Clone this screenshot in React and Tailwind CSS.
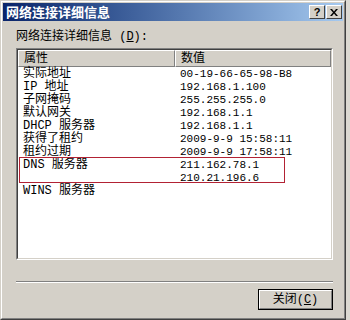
import React from 'react';

const ROWS = [
  ['实际地址', '00-19-66-65-98-B8'],
  ['IP 地址', '192.168.1.100'],
  ['子网掩码', '255.255.255.0'],
  ['默认网关', '192.168.1.1'],
  ['DHCP 服务器', '192.168.1.1'],
  ['获得了租约', '2009-9-9 15:58:11'],
  ['租约过期', '2009-9-9 17:58:11'],
  ['DNS 服务器', '211.162.78.1'],
  ['', '210.21.196.6'],
  ['WINS 服务器', ''],
];

/**
 * Raised caption button (? / X)
 */
const CaptionButton = ({ children }) => (
  <div className="w-[16px] h-[14px] bg-[#d4d0c8] border-t border-l border-white border-r border-b border-r-[#404040] border-b-[#404040] flex items-center justify-center text-black">
    {children}
  </div>
);

const HeaderCell = ({ label, className }) => (
  <div
    className={`h-[17px] flex items-center pl-[5px] bg-[#d4d0c8] border-t border-l border-white border-r border-b border-r-[#808080] border-b-[#808080] leading-[14px] ${className || ''}`}
  >
    {label}
  </div>
);

export default function App() {
  return (
    <div className="w-[350px] h-[320px] bg-[#dcd9d2] font-['Liberation_Mono','Noto_Sans_CJK_SC',monospace] text-[12px] text-black">
      <div className="w-[346px] h-[320px] border-t border-l border-[#d4d0c8] border-r border-b border-r-[#404040] border-b-[#404040]">
        <div className="h-full flex flex-col bg-[#d4d0c8] border-t border-l border-white border-r border-b border-r-[#808080] border-b-[#808080] p-[1px]">
          {/* Title bar */}
          <div className="h-[18px] flex items-center justify-between pl-[3px] pr-[1px] bg-gradient-to-r from-[#0a246a] to-[#a6caf0]">
            <span className="font-['Noto_Sans_CJK_SC',sans-serif] font-bold text-[13px] leading-[16px] text-white">
              网络连接详细信息
            </span>
            <div className="flex items-center">
              <CaptionButton>
                <span className="font-['Liberation_Sans',sans-serif] font-bold text-[11px] leading-[11px]">?</span>
              </CaptionButton>
              <div className="ml-[1px]">
                <CaptionButton>
                  <svg width="8" height="7" viewBox="0 0 8 7">
                    <path d="M0 0h2l2 2.5L6 0h2L5 3.5 8 7H6L4 4.5 2 7H0l3-3.5z" fill="#000" />
                  </svg>
                </CaptionButton>
              </div>
            </div>
          </div>

          {/* Body */}
          <div className="flex-1 flex flex-col pl-[13px] pr-[10px]">
            <div className="mt-[9px] h-[14px] leading-[14px]">
              网络连接详细信息 (<span className="underline">D</span>):
            </div>

            {/* List view */}
            <div className="relative mt-[4px] h-[212px] border-t border-l border-[#808080] border-r border-b border-r-white border-b-white">
              <div className="h-full bg-white border-t border-l border-[#404040] border-r border-b border-r-[#d4d0c8] border-b-[#d4d0c8]">
                <div className="flex">
                  <HeaderCell label="属性" className="w-[157px]" />
                  <HeaderCell label="数值" className="flex-1" />
                </div>
                <div className="flex flex-col mt-[1px]">
                  {ROWS.map(([name, value], i) => (
                    <div key={i} className="flex h-[13px] leading-[13px]">
                      <div className="w-[157px] pl-[5px]">{name}</div>
                      <div className="flex-1 pl-[5px] text-[11px]">{value}</div>
                    </div>
                  ))}
                </div>
              </div>
              {/* highlight around DNS rows */}
              <div className="absolute left-[2px] top-[108px] w-[266px] h-[26px] border border-[#b22234]" />
            </div>

            {/* Separator */}
            <div className="mt-[21px] h-[2px] border-t border-[#808080] border-b border-b-white" />

            {/* Buttons */}
            <div className="mt-[6px] flex justify-end">
              <button className="w-[75px] h-[21px] border border-black bg-[#d4d0c8]">
                <div className="h-full flex items-center justify-center border-t border-l border-white border-r border-b border-r-[#808080] border-b-[#808080] leading-[14px]">
                  关闭(<span className="underline">C</span>)
                </div>
              </button>
            </div>
          </div>
        </div>
      </div>
    </div>
  );
}
